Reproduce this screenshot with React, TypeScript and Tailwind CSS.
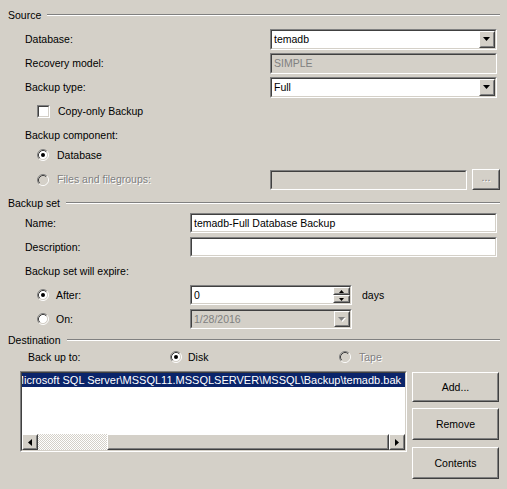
import React from 'react'

const disabledText = 'text-[#808080] [text-shadow:1px_1px_0_#ffffff]'

function Sunken({ className = '', inner = 'bg-white', children }: {
  className?: string
  inner?: string
  children?: React.ReactNode
}) {
  return (
    <div className={`border border-t-[#808080] border-l-[#808080] border-b-white border-r-white ${className}`}>
      <div className={`h-full flex items-center border border-t-[#404040] border-l-[#404040] border-b-[#d4d0c8] border-r-[#d4d0c8] ${inner}`}>
        {children}
      </div>
    </div>
  )
}

function Raised({ className = '', children }: { className?: string; children?: React.ReactNode }) {
  return (
    <div className={`bg-[#d4d0c8] border border-t-white border-l-white border-b-[#404040] border-r-[#404040] ${className}`}>
      <div className="h-full flex items-center justify-center border border-t-[#d4d0c8] border-l-[#d4d0c8] border-b-[#808080] border-r-[#808080]">
        {children}
      </div>
    </div>
  )
}

function DownArrow({ disabled }: { disabled?: boolean }) {
  return (
    <svg width="8" height="5" viewBox="0 0 8 5">
      {disabled && <path d="M1 1h7l-3.5 4z" fill="#ffffff" />}
      <path d="M0 0h7l-3.5 4z" fill={disabled ? '#808080' : '#000000'} />
    </svg>
  )
}

function Combo({ value, className, disabled }: { value: string; className: string; disabled?: boolean }) {
  return (
    <Sunken className={className} inner={disabled ? 'bg-[#d4d0c8]' : 'bg-white'}>
      <span className={`flex-1 pl-[2px] whitespace-nowrap ${disabled ? 'text-[#808080]' : ''}`}>{value}</span>
      <Raised className="w-[16px] h-full">
        <DownArrow disabled={disabled} />
      </Raised>
    </Sunken>
  )
}

function Radio({ checked, disabled }: { checked?: boolean; disabled?: boolean }) {
  return (
    <svg width="12" height="12" viewBox="0 0 12 12" className="shrink-0">
      <circle cx="6" cy="6" r="4.5" fill={disabled ? '#d4d0c8' : '#ffffff'} />
      <path d="M2.11 9.89A5.5 5.5 0 0 1 9.89 2.11" fill="none" stroke="#808080" />
      <path d="M9.89 2.11A5.5 5.5 0 0 1 2.11 9.89" fill="none" stroke="#ffffff" />
      <path d="M2.82 9.18A4.5 4.5 0 0 1 9.18 2.82" fill="none" stroke="#404040" />
      <path d="M9.18 2.82A4.5 4.5 0 0 1 2.82 9.18" fill="none" stroke="#d4d0c8" />
      {checked && <circle cx="6" cy="6" r="2" fill="#000000" />}
    </svg>
  )
}

function Header({ label, className = '' }: { label: string; className?: string }) {
  return (
    <div className={`flex items-center pr-[7px] ${className}`}>
      <span>{label}</span>
      <div className="ml-[6px] flex-1 border-t border-t-[#808080] border-b border-b-white" />
    </div>
  )
}

export default function App() {
  return (
    <div className="w-[507px] h-[489px] overflow-hidden bg-[#d4d0c8] pl-2 pt-2 text-black text-[10.5px] leading-none font-['Liberation_Sans',Arial,sans-serif]">
      <Header label="Source" className="h-[14px]" />

      <div className="mt-[5px] h-[24px] flex items-center pl-[17px]">
        <span className="w-[245px]">Database:</span>
        <Combo value="temadb" className="w-[227px] h-[21px]" />
      </div>
      <div className="h-[24px] flex items-center pl-[17px]">
        <span className="w-[245px]">Recovery model:</span>
        <Sunken className="w-[227px] h-[21px]" inner="bg-[#d4d0c8]">
          <span className="pl-[2px] text-[#808080]">SIMPLE</span>
        </Sunken>
      </div>
      <div className="h-[24px] flex items-center pl-[17px]">
        <span className="w-[245px]">Backup type:</span>
        <Combo value="Full" className="w-[227px] h-[21px]" />
      </div>
      <div className="h-[24px] flex items-center pl-[29px]">
        <Sunken className="w-[13px] h-[13px]" />
        <span className="ml-[8px]">Copy-only Backup</span>
      </div>
      <div className="h-[24px] flex items-center pl-[17px]">
        <span>Backup component:</span>
      </div>
      <div className="h-[16px] flex items-center pl-[29px]">
        <Radio checked />
        <span className="ml-[8px]">Database</span>
      </div>
      <div className="h-[33px] flex items-center pl-[29px]">
        <div className="w-[233px] flex items-center">
          <Radio disabled />
          <span className={`ml-[8px] ${disabledText}`}>Files and filegroups:</span>
        </div>
        <Sunken className="w-[197px] h-[20px]" inner="bg-[#d4d0c8]" />
        <Raised className="ml-[5px] w-[28px] h-[21px]">
          <span className={`pb-[4px] ${disabledText}`}>...</span>
        </Raised>
      </div>

      <Header label="Backup set" className="h-[14px]" />

      <div className="mt-[1px] h-[24px] flex items-center pl-[17px]">
        <span className="w-[165px]">Name:</span>
        <Sunken className="w-[307px] h-[20px]">
          <span className="pl-[2px] whitespace-nowrap">temadb-Full Database Backup</span>
        </Sunken>
      </div>
      <div className="h-[24px] flex items-center pl-[17px]">
        <span className="w-[165px]">Description:</span>
        <Sunken className="w-[307px] h-[20px]" />
      </div>
      <div className="h-[24px] flex items-center pl-[17px]">
        <span>Backup set will expire:</span>
      </div>
      <div className="h-[24px] flex items-center pl-[29px]">
        <div className="w-[153px] flex items-center">
          <Radio checked />
          <span className="ml-[7px]">After:</span>
        </div>
        <Sunken className="w-[162px] h-[20px]">
          <span className="flex-1 pl-[2px]">0</span>
          <div className="h-full w-[17px] flex flex-col">
            <Raised className="flex-1">
              <svg width="5" height="3" viewBox="0 0 5 3"><path d="M2.5 0L5 3H0z" fill="#000" /></svg>
            </Raised>
            <Raised className="flex-1">
              <svg width="5" height="3" viewBox="0 0 5 3"><path d="M0 0h5L2.5 3z" fill="#000" /></svg>
            </Raised>
          </div>
        </Sunken>
        <span className="ml-[10px]">days</span>
      </div>
      <div className="h-[24px] flex items-center pl-[29px]">
        <div className="w-[153px] flex items-center">
          <Radio />
          <span className="ml-[7px]">On:</span>
        </div>
        <Combo value="1/28/2016" className="w-[162px] h-[20px]" disabled />
      </div>

      <Header label="Destination" className="h-[18px]" />

      <div className="h-[16px] flex items-center pl-[20px]">
        <span className="w-[142px]">Back up to:</span>
        <div className="w-[169px] flex items-center">
          <Radio checked />
          <span className="ml-[6px]">Disk</span>
        </div>
        <Radio disabled />
        <span className={`ml-[8px] ${disabledText}`}>Tape</span>
      </div>

      <div className="mt-[6px] flex items-start pl-[12px]">
        <Sunken className="w-[387px] h-[81px]">
          <div className="h-full w-full flex flex-col">
            <div className="flex-1 overflow-hidden">
              {/* list is scrolled to the right, so the start of the path is out of view */}
              <div className="h-[14px] flex items-center justify-end overflow-hidden bg-[#0a246a] text-white text-[11px] pr-[4px] whitespace-nowrap">
                <span className="shrink-0">C:\Program Files\Microsoft SQL Server\MSSQL11.MSSQLSERVER\MSSQL\Backup\temadb.bak</span>
              </div>
            </div>
            <div className="h-[16px] flex">
              <Raised className="w-[16px] h-[16px]">
                <svg width="4" height="7" viewBox="0 0 4 7"><path d="M4 0v7L0 3.5z" fill="#000" /></svg>
              </Raised>
              <div className="w-[69px] h-full bg-[repeating-conic-gradient(#ffffff_0_25%,#d4d0c8_0_50%)] bg-[length:2px_2px]" />
              <Raised className="flex-1 h-[16px]" />
              <Raised className="w-[16px] h-[16px]">
                <svg width="4" height="7" viewBox="0 0 4 7"><path d="M0 0v7L4 3.5z" fill="#000" /></svg>
              </Raised>
            </div>
          </div>
        </Sunken>
        <div className="ml-[5px] mt-[1px] w-[87px] flex flex-col">
          <Raised className="h-[30px]">Add...</Raised>
          <Raised className="mt-[6px] h-[32px]">Remove</Raised>
          <Raised className="mt-[7px] h-[32px]">Contents</Raised>
        </div>
      </div>
    </div>
  )
}
